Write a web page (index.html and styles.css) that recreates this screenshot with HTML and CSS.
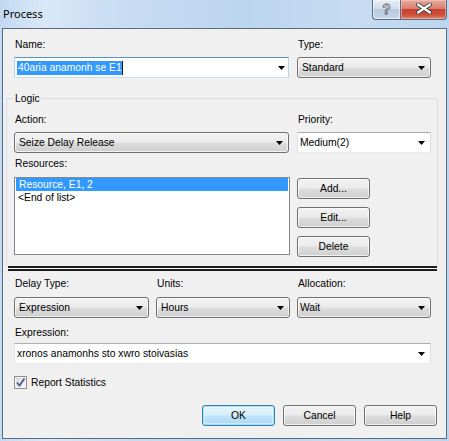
FILE: index.html
```html
<!DOCTYPE html>
<html>
<head>
<meta charset="utf-8">
<title>Process</title>
<link rel="stylesheet" href="styles.css">
</head>
<body>
<div class="window">
  <div class="titlebar">
    <span class="title">Process</span>
    <div class="caption-btns">
      <div class="cbtn help"><span class="qmark">?</span></div>
      <div class="cbtn close">
        <svg width="16" height="11" viewBox="0 0 16 11">
          <path d="M2 1.5 L14 9.5 M14 1.5 L2 9.5" stroke="#3a3f46" stroke-width="4" stroke-linecap="round" fill="none"/>
          <path d="M2 1.5 L14 9.5 M14 1.5 L2 9.5" stroke="#ffffff" stroke-width="2.2" stroke-linecap="round" fill="none"/>
        </svg>
      </div>
    </div>
  </div>
  <div class="client">
    <div class="row top-row">
      <div class="field w-main">
        <div class="label">Name:</div>
        <div class="combo edit focused">
          <span class="sel">40aria anamonh se E1</span><span class="caret"></span>
          <i class="arrow"></i>
        </div>
      </div>
      <div class="field w-side">
        <div class="label">Type:</div>
        <div class="combo list"><span class="val">Standard</span><i class="arrow"></i></div>
      </div>
    </div>

    <fieldset class="group">
      <legend>Logic</legend>
      <div class="row gap8">
        <div class="field w-main">
          <div class="label">Action:</div>
          <div class="combo list"><span class="val pl5">Seize Delay Release</span><i class="arrow"></i></div>
        </div>
        <div class="field w-side">
          <div class="label">Priority:</div>
          <div class="combo edit"><span class="val pl3">Medium(2)</span><i class="arrow"></i></div>
        </div>
      </div>
      <div class="label res-label">Resources:</div>
      <div class="row res-row">
        <div class="listbox">
          <div class="item selected">Resource, E1, 2</div>
          <div class="item">&lt;End of list&gt;</div>
        </div>
        <div class="btn-col">
          <div class="btn">Add...</div>
          <div class="btn">Edit...</div>
          <div class="btn">Delete</div>
        </div>
      </div>
    </fieldset>

    <div class="dline"></div>

    <div class="row bottom-row">
      <div class="field w-delay">
        <div class="label">Delay Type:</div>
        <div class="combo list"><span class="val pl5">Expression</span><i class="arrow"></i></div>
      </div>
      <div class="field w-side">
        <div class="label">Units:</div>
        <div class="combo list"><span class="val">Hours</span><i class="arrow"></i></div>
      </div>
      <div class="field w-side">
        <div class="label">Allocation:</div>
        <div class="combo list"><span class="val pl3">Wait</span><i class="arrow"></i></div>
      </div>
    </div>

    <div class="field expr">
      <div class="label">Expression:</div>
      <div class="combo edit"><span class="val pl3">xronos anamonhs sto xwro stoivasias</span><i class="arrow"></i></div>
    </div>

    <div class="row check-row">
      <span class="checkbox">
        <svg width="11" height="11" viewBox="0 0 11 11">
          <path d="M2 5.5 L4.5 8.5 L9.5 1.5" stroke="#4a5c95" stroke-width="1.8" fill="none"/>
        </svg>
      </span>
      <span class="check-label">Report Statistics</span>
    </div>

    <div class="row btn-row">
      <div class="btn default">OK</div>
      <div class="btn">Cancel</div>
      <div class="btn">Help</div>
    </div>
  </div>
</div>
</body>
</html>
```

FILE: styles.css
```css
* { box-sizing: border-box; }
html, body { margin: 0; padding: 0; }
body {
  width: 449px;
  height: 441px;
  overflow: hidden;
  font-family: "Liberation Sans", Arial, sans-serif;
  font-size: 10.3px;
  color: #000;
}
.window {
  width: 449px;
  height: 441px;
  display: flex;
  flex-direction: column;
  background: linear-gradient(to right, #c3d9f1 0%, #d9e8f7 10%, #c9ddf3 25%, #bcd5ef 55%, #c7dcf2 80%, #bcd5ef 100%);
}
.titlebar {
  height: 28px;
  display: flex;
  align-items: flex-start;
  flex: none;
}
.title {
  font-family: "Noto Sans", "Open Sans", sans-serif;
  font-size: 11px;
  line-height: 15px;
  margin: 6px 0 0 3px;
  color: #000;
}
.caption-btns {
  margin-left: auto;
  margin-right: 2px;
  display: flex;
  height: 20px;
}
.cbtn {
  height: 20px;
  display: flex;
  align-items: center;
  justify-content: center;
  border: 1px solid #5d6b7d;
  border-top: none;
}
.help {
  width: 28px;
  border-right: none;
  border-radius: 0 0 0 4px;
  background: linear-gradient(#e4ecf5 0%, #d3dfec 45%, #b9cadd 50%, #c8d8ea 100%);
  box-shadow: inset 0 0 0 1px rgba(255,255,255,0.5);
}
.qmark {
  font-family: "Liberation Sans", Arial, sans-serif;
  font-weight: bold;
  font-size: 14px;
  line-height: 14px;
  color: #f4f6f8;
  -webkit-text-stroke: 0.8px #55606c;
  margin-top: -1px;
}
.close {
  width: 47px;
  border-radius: 0 0 4px 0;
  background: linear-gradient(#e8aa9d 0%, #d9806f 45%, #c5412f 50%, #d0533c 80%, #dd8a6f 100%);
  box-shadow: inset 0 0 0 1px rgba(255,220,210,0.45);
}
.close svg { margin-top: -2px; }

.client {
  flex: 1;
  margin: 0 2px 2px 2px;
  background: #f0f0f0;
  border: 1px solid #5b6c80;
  padding-top: 9px;
}
.row { display: flex; }
.gap8 { gap: 8px; }
.top-row { margin-left: 11px; gap: 8px; }
.field { display: flex; flex-direction: column; }
.w-main { width: 275px; }
.w-side { width: 134px; }
.w-delay { width: 135px; }
.label {
  line-height: 13px;
  height: 13px;
  padding-left: 1px;
  margin-bottom: 6px;
  white-space: nowrap;
}

.combo {
  height: 21px;
  display: flex;
  align-items: center;
  white-space: nowrap;
  overflow: hidden;
}
.combo .val {
  flex: 1;
  line-height: 19px;
  padding-left: 4px;
}
.combo .val.pl5 { padding-left: 4px; }
.combo .val.pl3 { padding-left: 2px; }
.combo.edit {
  background: #fff;
  border: 1px solid;
  border-color: #abadb3 #dbdfe6 #e3e9ef #e2e3ea;
}
.combo.edit.focused {
  border-color: #5a92c0 #b5d3ea #c5e0f0 #b5d3ea;
}
.combo.list {
  border: 1px solid #707070;
  border-radius: 3px;
  background: linear-gradient(#f2f2f2 0%, #ebebeb 48%, #dddddd 52%, #cfcfcf 100%);
  box-shadow: inset 0 0 0 1px rgba(255,255,255,0.7);
}
.arrow {
  flex: none;
  width: 7px;
  height: 4px;
  margin: 1px 5px 0 0;
  background: #000;
  clip-path: polygon(0 0, 100% 0, 50% 100%);
}
.sel {
  margin-left: 2px;
  padding-left: 1px;
  height: 14px;
  line-height: 14px;
  background: #3399ff;
  color: #fff;
}
.caret {
  width: 1px;
  height: 14px;
  background: #1b1b1b;
  flex: none;
  margin-right: auto;
}
.focused .arrow { margin-right: 3px; }

.group {
  margin: 14px 0 0 3px;
  width: 432px;
  padding: 8px 0 9px 7px;
  border: 1px solid #d5dfe5;
  border-bottom: none;
  border-radius: 3px 3px 0 0;
  min-inline-size: 0;
}
.group legend {
  padding: 0 1px;
  line-height: 13px;
}
.res-label { margin-top: 4px; margin-bottom: 7px; }
.res-row { gap: 7px; }
.listbox {
  width: 276px;
  height: 78px;
  background: #fff;
  border: 1px solid #828790;
  padding: 0 1px;
}
.item {
  height: 13px;
  line-height: 13px;
  padding-left: 3px;
  white-space: nowrap;
}
.item + .item { padding-left: 2px; }
.item.selected { background: #3399ff; color: #fff; }
.btn-col {
  display: flex;
  flex-direction: column;
  gap: 8px;
  margin-top: 1px;
}
.btn {
  width: 73px;
  height: 21px;
  line-height: 19px;
  text-align: center;
  border: 1px solid #707070;
  border-radius: 3px;
  background: linear-gradient(#f2f2f2 0%, #ebebeb 48%, #dddddd 52%, #cfcfcf 100%);
  box-shadow: inset 0 0 0 1px rgba(255,255,255,0.7);
  white-space: nowrap;
}
.btn.default {
  border-color: #3c7fb1;
  background: linear-gradient(#e5f4fc 0%, #d6eefb 48%, #c0e4f9 52%, #a9d9f4 100%);
  box-shadow: inset 0 0 0 1px #9fe1fb, inset 0 0 0 2px rgba(255,255,255,0.4);
}

.dline {
  margin-left: 5px;
  width: 429px;
  height: 5px;
  border-top: 2px solid #1e1e1e;
  border-bottom: 2px solid #1e1e1e;
  background: #ffffff;
}
.bottom-row { margin: 6px 0 0 11px; gap: 7px; }
.bottom-row .label { margin-bottom: 7px; }
.expr { margin: 8px 0 0 11px; width: 417px; }
.expr .label { margin-bottom: 4px; }
.check-row {
  margin: 12px 0 0 11px;
  align-items: center;
  height: 13px;
}
.checkbox {
  width: 13px;
  height: 13px;
  border: 1px solid #8e8f8f;
  background: linear-gradient(135deg, #d4d4d4 0%, #ececec 60%, #f6f6f6 100%);
  box-shadow: inset 0 0 0 1px #f4f4f4;
  display: flex;
  align-items: center;
  justify-content: center;
}
.check-label {
  margin-left: 4px;
  line-height: 13px;
}
.btn-row {
  margin-top: 16px;
  justify-content: flex-end;
  padding-right: 9px;
  gap: 8px;
}
```
